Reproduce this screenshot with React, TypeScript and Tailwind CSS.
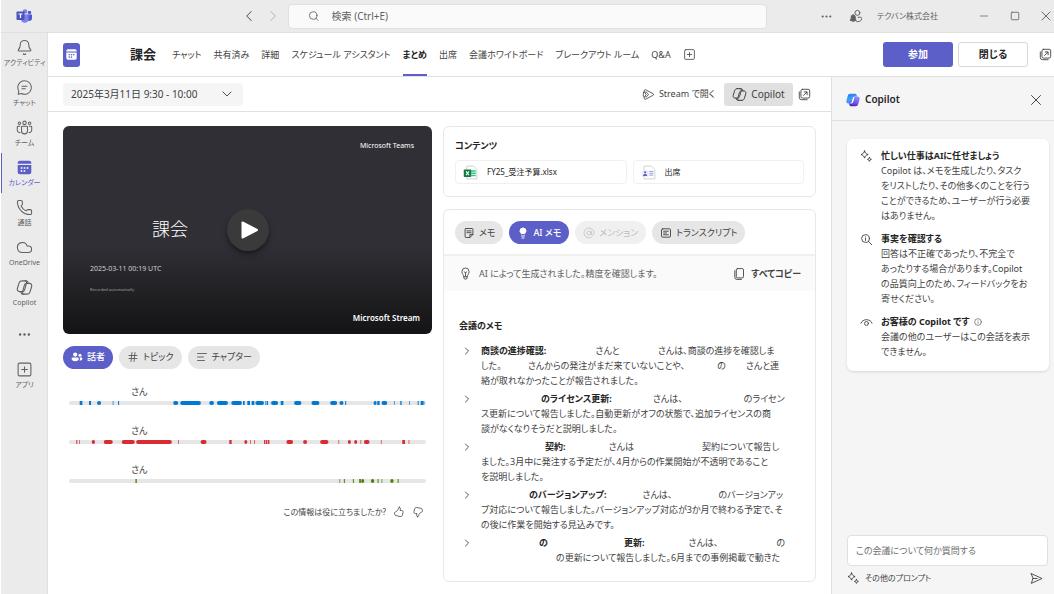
import type { ReactNode } from 'react'
import {
  AtSign,
  Bell,
  ChevronDown,
  ChevronLeft,
  ChevronRight,
  Cloud,
  Ellipsis,
  Hash,
  Info,
  Lightbulb,
  Minus,
  Phone,
  Search,
  Square,
  SquarePlus,
  TextAlignStart,
  X,
} from 'lucide-react'

type Range = [number, number]

// a string is text, a number is the width of a hidden name, { b } is bold text
type Part = string | number | { b: string }

const TRACK = 1069

const SPEAKERS: { color: string; ranges: Range[] }[] = [
  {
    color: '#0078d4',
    ranges: [
      [32, 40], [60, 66], [84, 96], [131, 133], [147, 150], [312, 327], [333, 395], [420, 434],
      [443, 476], [486, 518], [521, 526], [534, 542], [547, 555], [558, 584], [588, 591], [593, 596],
      [605, 626], [634, 642], [674, 696], [726, 750], [782, 803], [810, 822], [827, 830], [912, 921],
      [923, 930], [936, 953], [973, 975], [992, 996], [1019, 1021], [1044, 1047], [1053, 1060], [1061, 1064],
    ],
  },
  {
    color: '#d92c32',
    ranges: [
      [22, 25], [31, 33], [68, 78], [104, 131], [158, 197], [201, 308], [327, 329], [394, 412],
      [480, 487], [525, 534], [543, 545], [555, 557], [584, 588], [590, 594], [596, 600], [651, 671],
      [701, 713], [752, 777], [807, 809], [835, 844], [854, 863], [873, 875], [883, 900], [934, 936],
      [998, 1006], [1017, 1019],
    ],
  },
  {
    color: '#498205',
    ranges: [
      [199, 203], [810, 812], [823, 826], [850, 853], [869, 874], [875, 884], [904, 914], [924, 927],
      [936, 938], [962, 972], [984, 987],
    ],
  },
]

const NOTES: Part[][][] = [
  [
    [{ b: '商談の進捗確認:' }, 49, 'さんと', 38, 'さんは、商談の進捗を確認しま'],
    ['した。', 26, 'さんからの発注がまだ来ていないことや、', 32, 'の', 20, 'さんと連'],
    ['絡が取れなかったことが報告されました。'],
  ],
  [
    [60, { b: 'のライセンス更新:' }, 41, 'さんは、', 61, 'のライセン'],
    ['ス更新について報告しました。自動更新がオフの状態で、追加ライセンスの商'],
    ['談がなくなりそうだと説明しました。'],
  ],
  [
    [64, { b: '契約:' }, 43, 'さんは', 68, '契約について報告し'],
    ['ました。3月中に発注する予定だが、4月からの作業開始が不透明であること'],
    ['を説明しました。'],
  ],
  [
    [48, { b: 'のバージョンアップ:' }, 36, 'さんは、', 46, 'のバージョンアッ'],
    ['プ対応について報告しました。バージョンアップ対応が3か月で終わる予定で、そ'],
    ['の後に作業を開始する見込みです。'],
  ],
  [
    [58, { b: 'の' }, 76, { b: '更新:' }, 44, 'さんは、', 58, 'の'],
    [75, 'の更新について報告しました。6月までの事例掲載で動きた'],
  ],
]

const TABS = [
  'チャット',
  '共有済み',
  '詳細',
  'スケジュール アシスタント',
  'まとめ',
  '出席',
  '会議ホワイトボード',
  'ブレークアウト ルーム',
  'Q&A',
]

function Icon({ size = 14, sw = 1.2, className, children }: { size?: number; sw?: number; className?: string; children: ReactNode }) {
  return (
    <svg
      width={size}
      height={size}
      viewBox="0 0 20 20"
      fill="none"
      stroke="currentColor"
      strokeWidth={sw}
      strokeLinecap="round"
      strokeLinejoin="round"
      className={`shrink-0 ${className ?? ''}`}
      aria-hidden="true"
    >
      {children}
    </svg>
  )
}

function TeamsLogo() {
  return (
    <svg width="16" height="14" viewBox="0 0 32 28" aria-hidden="true">
      <circle cx="27" cy="7" r="3.5" fill="#5059c9" />
      <path d="M21 11h10a1 1 0 0 1 1 1v7a5 5 0 0 1-9 3z" fill="#5059c9" />
      <circle cx="18" cy="5" r="4.6" fill="#7b83eb" />
      <path d="M10 11h14a1 1 0 0 1 1 1v8a7.500 7.500 0 0 1-15 0z" fill="#7b83eb" />
      <rect x="1" y="5" width="16" height="17" rx="1.500" fill="#4b53bc" />
      <path d="M5 9h8v2.200h-2.800V18H7.800v-6.800H5z" fill="#fff" />
    </svg>
  )
}

function CopilotOutline({ size = 16 }: { size?: number }) {
  return (
    <Icon size={size} sw={1.3}>
      <path d="M6.800 2.200h3.900c1.300 0 2 1 1.700 2.200l-2.300 8.300c-.4 1.300-1.300 2.100-2.600 2.100H4.200c-2 0-3.200-1.700-2.600-3.600l1.900-6.300c.5-1.700 1.700-2.700 3.300-2.700z" />
      <path d="M13.200 17.800H9.300c-1.300 0-2-1-1.700-2.200l2.300-8.300c.4-1.300 1.300-2.100 2.600-2.100h3.300c2 0 3.200 1.700 2.600 3.600l-1.900 6.300c-.5 1.700-1.700 2.700-3.300 2.700z" />
      <path d="M10.700 2.200h1.200c1.200 0 1.900.6 2.200 1.700l.4 1.300M9.300 17.800H8.100c-1.200 0-1.900-.6-2.200-1.700l-.4-1.300" />
    </Icon>
  )
}

function CopilotLogo() {
  return (
    <svg width="14" height="14" viewBox="0 0 20 20" aria-hidden="true">
      <defs>
        <linearGradient id="cpA" x1="0" y1="0" x2="0.3" y2="1">
          <stop offset="0" stopColor="#3b6be8" />
          <stop offset="0.6" stopColor="#2fa8f6" />
          <stop offset="1" stopColor="#5c7cf4" />
        </linearGradient>
        <linearGradient id="cpB" x1="0.6" y1="0" x2="0.3" y2="1">
          <stop offset="0" stopColor="#8f8bf8" />
          <stop offset="0.6" stopColor="#7257ea" />
          <stop offset="1" stopColor="#4a1fb8" />
        </linearGradient>
      </defs>
      <path d="M6 1h7c1.200 0 1.800.7 2.100 1.700l.8 2.300H13c-1.500 0-2.300.8-2.700 2.200L8.500 13c-.4 1.300-1 2-2.500 2H3.500C1.300 15 0 13.300.6 11.200L2.600 3.800C3.100 2 4.300 1 6 1z" fill="url(#cpA)" />
      <path d="M14 19H7c-1.200 0-1.800-.7-2.100-1.700L4.100 15H7c1.500 0 2.300-.8 2.700-2.200L11.500 7c.4-1.300 1-2 2.500-2h2.500c2.200 0 3.500 1.700 2.900 3.800l-2 7.400c-.5 1.800-1.700 2.800-3.400 2.800z" fill="url(#cpB)" />
      <path d="M11 6.500 9 13.500" stroke="#fff" strokeWidth="1.700" strokeLinecap="round" />
    </svg>
  )
}

function ChatIcon() {
  return (
    <Icon size={17}>
      <path d="M10 2a8 8 0 1 1-3.600 15.100L2.500 18l.9-3.700A8 8 0 0 1 10 2z" />
      <path d="M7 8.500h6M7 11.500h4" />
    </Icon>
  )
}

function TeamIcon() {
  return (
    <Icon size={17}>
      <circle cx="10" cy="4.500" r="2" />
      <circle cx="4" cy="5" r="1.500" />
      <circle cx="16" cy="5" r="1.500" />
      <path d="M7.500 8.500h5a1 1 0 0 1 1 1V14a3.500 3.500 0 0 1-7 0V9.500a1 1 0 0 1 1-1z" />
      <path d="M4.500 8.500h-2a1 1 0 0 0-1 1v3.500a3 3 0 0 0 3.300 3M15.500 8.500h2a1 1 0 0 1 1 1v3.500a3 3 0 0 1-3.300 3" />
    </Icon>
  )
}

function CalendarFilled({ size = 17, fill = '#5b5fc7', dots = '#ebebeb' }: { size?: number; fill?: string; dots?: string }) {
  return (
    <svg width={size} height={size} viewBox="0 0 20 20" aria-hidden="true">
      <path d="M4.500 2h11A2.500 2.500 0 0 1 18 4.500v1H2v-1A2.500 2.500 0 0 1 4.500 2zM2 7h16v8.500a2.500 2.500 0 0 1-2.500 2.500h-11A2.500 2.500 0 0 1 2 15.500z" fill={fill} />
      <g fill={dots}>
        <circle cx="6.500" cy="10.500" r="1.200" />
        <circle cx="10" cy="10.500" r="1.200" />
        <circle cx="13.500" cy="10.500" r="1.200" />
        <circle cx="6.500" cy="14" r="1.200" />
        <circle cx="10" cy="14" r="1.200" />
      </g>
    </svg>
  )
}

function PopOutIcon() {
  return (
    <Icon size={13} sw={1.4}>
      <rect x="4.500" y="2" width="13.500" height="13.500" rx="2.500" />
      <path d="M2 6v8.500A3.500 3.500 0 0 0 5.500 18H14M8.500 11.500l5-5M9.500 6h4.500v4.500" />
    </Icon>
  )
}

function SparkleIcon() {
  return (
    <Icon size={13} sw={1.5}>
      <path d="M7 1.500c.9 3.200 2.200 4.500 5.500 5.500C9.200 8 7.900 9.300 7 12.500 6.100 9.300 4.800 8 1.500 7 4.800 6 6.100 4.700 7 1.500z" />
      <path d="M14.500 11.500c.5 1.900 1.200 2.600 3 3-1.800.5-2.500 1.200-3 3-.5-1.800-1.200-2.500-3-3 1.800-.4 2.500-1.100 3-3z" />
    </Icon>
  )
}

function ThumbIcon({ down }: { down?: boolean }) {
  return (
    <Icon size={12} sw={1.3} className={down ? 'rotate-180' : ''}>
      <path d="M10.500 2c1.800 0 2.300 1.800 1.300 5.500h2.700c1.700 0 2.700 1.300 2.300 2.900l-1.200 4.800c-.4 1.700-1.700 2.800-3.600 2.400L5 16c-1.300-.3-2-1.100-2.200-2.400L2.500 12c-.1-1 .3-1.600 1.200-2 3-1.300 4.300-2.500 5.200-5.500.4-1.600.8-2.500 1.600-2.500z" />
    </Icon>
  )
}

function RailItem({ icon, label, active }: { icon: ReactNode; label: string; active?: boolean }) {
  return (
    <a
      href="#"
      className={`flex h-10 flex-col items-center justify-center gap-[2px] border-l ${
        active ? 'border-[#5b5fc7] text-[#5b5fc7]' : 'border-transparent text-[#616161]'
      }`}
    >
      {icon}
      <span className="text-[7px] leading-[10px] whitespace-nowrap">{label}</span>
    </a>
  )
}

function Pill({ icon, label, active, disabled }: { icon: ReactNode; label: string; active?: boolean; disabled?: boolean }) {
  const tone = active
    ? 'bg-[#5b5fc7] text-white font-medium'
    : disabled
      ? 'bg-[#f0f0f0] text-[#bdbdbd]'
      : 'bg-[#e6e6e6] text-[#424242]'
  return (
    <button type="button" disabled={disabled} className={`flex h-[23px] items-center gap-1 rounded-full px-2 ${tone}`}>
      {icon}
      <span className="whitespace-nowrap">{label}</span>
    </button>
  )
}

function SpeakerRow({ color, ranges }: { color: string; ranges: Range[] }) {
  return (
    <li className="h-[39px] px-[6px]">
      <div className="pl-[62px] leading-[18px]">さん</div>
      <svg className="block h-1 w-full rounded-full bg-[#e6e6e6]" aria-hidden="true">
        {ranges.map(([a, b]) => (
          <rect
            key={a}
            x={`${(a / TRACK) * 100}%`}
            width={`${((b - a) / TRACK) * 100}%`}
            height="4"
            rx={b - a > 8 ? 2 : 0}
            fill={color}
          />
        ))}
      </svg>
    </li>
  )
}

function NoteLine({ parts }: { parts: Part[] }) {
  return (
    <div className="whitespace-nowrap">
      {parts.map((p, i) => {
        if (typeof p === 'number') return <span key={i} className="inline-block" style={{ width: p }} />
        if (typeof p === 'string') return <span key={i}>{p}</span>
        return <b key={i} className="font-bold text-[#242424]">{p.b}</b>
      })}
    </div>
  )
}

function FileCard({ icon, name }: { icon: ReactNode; name: string }) {
  return (
    <a href="#" className="flex h-6 items-center gap-[9px] rounded border border-[#f0f0f0] px-[7px] text-[8px] text-[#242424]">
      {icon}
      {name}
    </a>
  )
}

function Tip({ icon, title, info, lines }: { icon: ReactNode; title: string; info?: boolean; lines: string[] }) {
  return (
    <section className="flex gap-2">
      <div className="pt-[2px] text-[#424242]">{icon}</div>
      <div className="leading-[15px] whitespace-nowrap">
        <h3 className="flex items-center gap-1 font-bold text-[#242424]">
          {title}
          {info && <Info size={8} strokeWidth={1.5} />}
        </h3>
        {lines.map((l) => (
          <div key={l}>{l}</div>
        ))}
      </div>
    </section>
  )
}

function TitleBar() {
  return (
    <header className="grid h-[33px] grid-cols-[3fr_5fr_3fr] items-center border-b border-[#e0e0e0] bg-[#ebebeb] text-[#616161]">
      <div className="flex items-center justify-between pl-[15px]">
        <TeamsLogo />
        <div className="flex gap-[6px] pr-[6px]">
          <ChevronLeft size={18} strokeWidth={1.4} />
          <ChevronRight size={18} strokeWidth={1.4} className="text-[#bdbdbd]" />
        </div>
      </div>
      <label className="flex h-[25px] items-center gap-3 rounded border border-[#e0e0e0] bg-[#fafafa] px-[19px] text-[10px]">
        <Search size={12} strokeWidth={1.8} />
        <input type="text" aria-label="検索" placeholder="検索 (Ctrl+E)" className="w-full bg-transparent outline-none placeholder:text-[#616161]" />
      </label>
      <div className="flex items-center justify-end">
        <Ellipsis size={13} />
        <Icon size={14} sw={1.4} className="ml-4">
          <circle cx="12" cy="5.500" r="3.500" />
          <path d="M11 18h1.500c3.500 0 5.500-1.500 5.500-4.500 0-1-.6-1.700-1.500-1.700H13" />
          <path d="M6 8.500a3 3 0 0 1 3 3v2.500l1.300 2.500H1.700L3 14v-2.500a3 3 0 0 1 3-3zM4.800 17.500h2.400" fill="currentColor" />
        </Icon>
        <span className="ml-[14px] text-[8px] whitespace-nowrap">テクバン株式会社</span>
        <button type="button" aria-label="最小化" className="ml-10"><Minus size={12} strokeWidth={1.5} /></button>
        <button type="button" aria-label="最大化" className="ml-5"><Square size={10} strokeWidth={2} /></button>
        <button type="button" aria-label="ウィンドウを閉じる" className="ml-[18px]"><X size={16} strokeWidth={1.4} /></button>
      </div>
    </header>
  )
}

function Rail() {
  return (
    <nav className="w-[47px] shrink-0 border-r border-[#e0e0e0] bg-[#ebebeb]">
      <RailItem icon={<Bell size={17} strokeWidth={1.5} />} label="アクティビティ" />
      <RailItem icon={<ChatIcon />} label="チャット" />
      <RailItem icon={<TeamIcon />} label="チーム" />
      <RailItem icon={<CalendarFilled />} label="カレンダー" active />
      <RailItem icon={<Phone size={17} strokeWidth={1.5} />} label="通話" />
      <RailItem icon={<Cloud size={17} strokeWidth={1.5} />} label="OneDrive" />
      <RailItem icon={<CopilotOutline size={17} />} label="Copilot" />
      <button type="button" aria-label="その他" className="flex h-[42px] w-full items-center justify-center text-[#616161]">
        <Ellipsis size={15} />
      </button>
      <RailItem icon={<SquarePlus size={17} strokeWidth={1.5} />} label="アプリ" />
    </nav>
  )
}

function MeetingHeader() {
  return (
    <div className="flex h-11 items-center border-b border-[#e0e0e0] pr-[2px] pl-[15px]">
      <div className="flex h-6 w-[17px] items-center justify-center rounded-[3px] bg-[#5b5fc7]">
        <CalendarFilled size={13} fill="#fff" dots="#5b5fc7" />
      </div>
      <h1 className="ml-[50px] text-[13px] font-bold text-[#242424]">課会</h1>
      <div className="ml-4 flex h-full items-center gap-[12px]">
        {TABS.map((t) => (
          <a
            key={t}
            href="#"
            className={`flex h-full items-center border-y-2 border-transparent whitespace-nowrap ${
              t === 'まとめ' ? 'border-b-[#5b5fc7] font-bold text-[#242424]' : 'text-[#424242]'
            }`}
          >
            {t}
          </a>
        ))}
        <button type="button" aria-label="タブを追加"><SquarePlus size={13} strokeWidth={1.5} /></button>
      </div>
      <div className="ml-auto flex items-center gap-[5px] text-[10px]">
        <button type="button" className="h-[25px] w-[70px] rounded-[3px] bg-[#5b5fc7] font-bold text-white">参加</button>
        <button type="button" className="h-[25px] w-[70px] rounded-[3px] border border-[#d8d8d8] font-bold text-[#242424]">閉じる</button>
        <button type="button" aria-label="ポップアウト" className="ml-[6px]"><PopOutIcon /></button>
      </div>
    </div>
  )
}

function VideoColumn() {
  return (
    <div className="flex min-w-0 flex-col">
      <div className="relative flex aspect-video flex-col justify-between rounded-md bg-linear-to-b from-[#302f35] from-58% to-[#141416] text-white">
        <div className="pt-[14px] pr-[18px] text-right text-[7px] leading-3">Microsoft Teams</div>
        <div className="flex flex-col pt-[46px] pl-[27px]">
          <div className="pl-[62px] text-[18px] leading-6 font-light">課会</div>
          <div className="mt-[22px] text-[7px] leading-3 text-[#d0d0d0]">2025-03-11 00:19 UTC</div>
          <div className="mt-3 text-[4px] leading-[6px] text-[#a0a0a0]">Recorded automatically</div>
        </div>
        <div className="pr-3 pb-[10px] text-right text-[8px] leading-3 font-semibold">Microsoft Stream</div>
        <button
          type="button"
          aria-label="再生"
          className="absolute top-1/2 left-1/2 flex size-[42px] -translate-1/2 items-center justify-center rounded-full bg-[#3a3a3a] shadow-md shadow-black/40"
        >
          <svg width="20" height="20" viewBox="0 0 20 20" className="ml-1" aria-hidden="true">
            <path d="M2.500 2.500v15L17 10z" fill="#fff" stroke="#fff" strokeWidth="2" strokeLinejoin="round" />
          </svg>
        </button>
      </div>
      <div className="mt-3 flex gap-[6px]">
        <Pill
          active
          label="話者"
          icon={
            <svg width="12" height="12" viewBox="0 0 20 20" fill="currentColor" aria-hidden="true">
              <circle cx="7" cy="6" r="3.500" />
              <circle cx="15" cy="7" r="2.500" />
              <path d="M2.500 11h9a1.500 1.500 0 0 1 1.500 1.500c0 3-2.500 4.500-6 4.500s-6-1.500-6-4.500A1.500 1.500 0 0 1 2.500 11zM14.500 11h3a1.500 1.500 0 0 1 1.500 1.500c0 2.500-2 3.700-5 3.300.8-1 1-2 1-3.300a3 3 0 0 0-.5-1.500z" />
            </svg>
          }
        />
        <Pill icon={<Hash size={12} strokeWidth={1.5} />} label="トピック" />
        <Pill icon={<TextAlignStart size={12} strokeWidth={1.5} />} label="チャプター" />
      </div>
      <ul className="pt-[14px]">
        {SPEAKERS.map((s) => (
          <SpeakerRow key={s.color} color={s.color} ranges={s.ranges} />
        ))}
      </ul>
      <div className="mt-[2px] flex h-5 items-center justify-end gap-[7px] pr-2 text-[8px]">
        この情報は役に立ちましたか?
        <button type="button" aria-label="役に立った"><ThumbIcon /></button>
        <button type="button" aria-label="役に立たなかった"><ThumbIcon down /></button>
      </div>
    </div>
  )
}

function NotesColumn() {
  return (
    <div className="flex min-w-0 flex-col gap-3">
      <section className="h-[71px] rounded-md border border-[#e8e8e8] px-[11px] pt-[11px]">
        <h2 className="leading-4 font-bold text-[#242424]">コンテンツ</h2>
        <div className="mt-[6px] grid grid-cols-2 gap-[6px]">
          <FileCard
            name="FY25_受注予算.xlsx"
            icon={
              <svg width="15" height="15" viewBox="0 0 20 20" aria-hidden="true">
                <path d="M5 1.500h9l4.500 4.500v12.500H5z" fill="#fff" stroke="#c4c4c4" />
                <path d="M11 7h6v2h-6zM11 10h6v2h-6zM11 13h6v2h-6z" fill="#33c481" />
                <rect x="1" y="6" width="10" height="10" rx="1" fill="#107c41" />
                <path d="m4 8.500 4 5M8 8.500l-4 5" stroke="#fff" strokeWidth="1.400" />
              </svg>
            }
          />
          <FileCard
            name="出席"
            icon={
              <svg width="15" height="15" viewBox="0 0 20 20" aria-hidden="true">
                <path d="M4 1.500h10l4.500 4.500v12.500H4z" fill="#fff" stroke="#c4c4c4" />
                <rect x="1" y="7" width="9" height="9" rx="1" fill="#e8ebfa" />
                <circle cx="5.500" cy="9.700" r="1.500" fill="#5b5fc7" />
                <path d="M2.700 14.500c0-3.500 5.600-3.500 5.600 0z" fill="#5b5fc7" />
                <path d="M11 8.500h5.500M11 11h5.500M11 13.500h5.500" stroke="#8b8fe0" strokeWidth="1.200" />
              </svg>
            }
          />
        </div>
      </section>
      <section className="flex flex-1 flex-col rounded-md border border-[#e8e8e8]">
        <div className="flex gap-[6px] px-[11px] pt-[11px] pb-[10px]">
          <Pill
            label="メモ"
            icon={
              <Icon size={12} sw={1.5}>
                <path d="M5 2.500h10A1.500 1.500 0 0 1 16.500 4v8.500l-5 5H5A1.500 1.500 0 0 1 3.500 16V4A1.500 1.500 0 0 1 5 2.500zM16.500 12.500h-5v5M6.500 6.500h7M6.500 9.500h7" />
              </Icon>
            }
          />
          <Pill active label="AI メモ" icon={<Lightbulb size={12} fill="currentColor" />} />
          <Pill disabled label="メンション" icon={<AtSign size={12} strokeWidth={1.5} />} />
          <Pill
            label="トランスクリプト"
            icon={
              <Icon size={12} sw={1.5}>
                <rect x="2.500" y="3" width="15" height="14" rx="2" />
                <path d="M6 7h8M6 10h5M6 13h8" />
              </Icon>
            }
          />
        </div>
        <div className="flex h-[37px] items-center border-t-2 border-[#f0f0f0] bg-[#fafafa] pr-[14px] pl-[15px]">
          <Icon size={13} sw={1.3}>
            <path d="M7.500 14.500C7.300 12 4.500 11 4.500 7a5.500 5.500 0 0 1 11 0c0 4-2.800 5-3 7.500zM7.500 14.500V17c0 .8.700 1.500 1.500 1.500h2c.8 0 1.500-.7 1.500-1.500v-2.500M8 7.500l2 1.500 2-1.500M10 9v5" />
          </Icon>
          <span className="ml-[7px] text-[#616161]">AI によって生成されました。精度を確認します。</span>
          <button type="button" className="ml-auto flex items-center gap-[6px] font-bold text-[#424242]">
            <Icon size={12} sw={1.5}>
              <rect x="5.500" y="1" width="12" height="15.500" rx="2" />
              <path d="M3 4.500v11A3.500 3.500 0 0 0 6.500 19H14" />
            </Icon>
            すべてコピー
          </button>
        </div>
        <h2 className="mt-[27px] pl-[15px] leading-4 font-bold text-[#242424]">会議のメモ</h2>
        <ul className="mt-[9px] flex flex-col gap-[3px] pl-[17px] leading-[15px]">
          {NOTES.map((n, i) => (
            <li key={i} className="flex gap-2">
              <ChevronRight size={12} strokeWidth={1.8} className="mt-[2px] shrink-0" />
              <div>
                {n.map((parts, j) => (
                  <NoteLine key={j} parts={parts} />
                ))}
              </div>
            </li>
          ))}
        </ul>
      </section>
    </div>
  )
}

function CopilotPanel() {
  return (
    <aside className="flex w-[223px] shrink-0 flex-col border-l border-[#e0e0e0] bg-[#f5f5f5]">
      <div className="flex h-11 items-center border-b border-[#e0e0e0] pt-[2px] pr-[9px] pl-[14px]">
        <CopilotLogo />
        <span className="ml-[5px] text-[10px] font-semibold text-[#242424]">Copilot</span>
        <button type="button" aria-label="Copilot を閉じる" className="ml-auto"><X size={18} strokeWidth={1.3} /></button>
      </div>
      <div className="mt-[18px] mr-[5px] ml-[15px] flex flex-col gap-2 rounded-md bg-white px-[13px] pt-[9px] pb-3 shadow">
        <Tip
          icon={<SparkleIcon />}
          title="忙しい仕事はAIに任せましょう"
          lines={['Copilot は、メモを生成したり、タスク', 'をリストしたり、その他多くのことを行う', 'ことができるため、ユーザーが行う必要', 'はありません。']}
        />
        <Tip
          icon={
            <Icon size={13} sw={1.4}>
              <circle cx="8.500" cy="8.500" r="6" />
              <path d="m13 13 5 5M8.500 8v3.500M8.500 5.800v.1" />
            </Icon>
          }
          title="事実を確認する"
          lines={['回答は不正確であったり、不完全で', 'あったりする場合があります。Copilot', 'の品質向上のため、フィードバックをお', '寄せください。']}
        />
        <Tip
          icon={
            <Icon size={13} sw={1.4}>
              <path d="M1.500 11c2-7.300 15-7.300 17 0" />
              <circle cx="10" cy="11.500" r="3" />
            </Icon>
          }
          title="お客様の Copilot です"
          info
          lines={['会議の他のユーザーはこの会話を表示', 'できません。']}
        />
      </div>
      <div className="mt-auto pr-[6px] pb-[9px] pl-[15px]">
        <input
          type="text"
          aria-label="Copilot への質問"
          placeholder="この会議について何か質問する"
          className="h-[31px] w-full rounded border border-[#e0e0e0] bg-white px-2 outline-none placeholder:text-[#707070]"
        />
        <div className="mt-[5px] flex items-center justify-between pr-[5px]">
          <button type="button" className="flex items-center gap-[5px] text-[8px] leading-[14px]">
            <SparkleIcon />
            その他のプロンプト
          </button>
          <button type="button" aria-label="送信">
            <Icon size={13} sw={1.4}>
              <path d="M2 2.500 18.500 10 2 17.500 4.500 10zM4.500 10H11" />
            </Icon>
          </button>
        </div>
      </div>
    </aside>
  )
}

export default function App() {
  return (
    <div
      lang="ja"
      className="flex min-h-screen flex-col overflow-hidden border-l border-white bg-white font-['Noto_Sans','Noto_Sans_CJK_JP',sans-serif] text-[9px] text-[#424242] [font-feature-settings:'palt']"
    >
      <TitleBar />
      <div className="flex flex-1">
        <Rail />
        <main className="flex min-w-0 flex-1 flex-col">
          <MeetingHeader />
          <div className="flex flex-1">
            <div className="flex min-w-0 flex-1 flex-col">
              <div className="flex h-[35px] items-center border-b border-[#e0e0e0] pr-5 pl-[15px]">
                <button type="button" className="flex h-[23px] w-[180px] items-center justify-between rounded bg-[#f5f5f5] pr-2 pl-2 text-[10px]">
                  2025年3月11日 9:30 - 10:00
                  <ChevronDown size={16} strokeWidth={1.4} />
                </button>
                <button type="button" className="ml-auto flex items-center gap-1">
                  <Icon size={13} sw={1.3}>
                    <path d="M3.500 5.500V4c0-1.200 1-1.800 2-1.300l11.500 6c1.200.6 1.200 2 0 2.600l-11.500 6c-1 .5-2-.1-2-1.300v-1.500" />
                    <path d="M3 6.500h3.500c.5 0 1 .2 1.300.6l2 2.900-2 2.900c-.3.400-.8.6-1.300.6H3c-.6 0-1-.4-1-1v-5c0-.6.4-1 1-1zM5 8l1.500 2L5 12" />
                  </Icon>
                  Stream で開く
                </button>
                <button type="button" className="ml-[9px] flex h-[23px] w-[69px] items-center justify-center gap-1 rounded-[3px] bg-[#e0e0e0] text-[10px]">
                  <CopilotOutline size={15} />
                  Copilot
                </button>
                <button type="button" aria-label="新しいウィンドウで開く" className="ml-[5px]"><PopOutIcon /></button>
              </div>
              <div className="grid flex-1 grid-cols-[369fr_373fr] gap-[11px] px-[15px] pt-[14px] pb-3">
                <VideoColumn />
                <NotesColumn />
              </div>
            </div>
            <CopilotPanel />
          </div>
        </main>
      </div>
    </div>
  )
}
